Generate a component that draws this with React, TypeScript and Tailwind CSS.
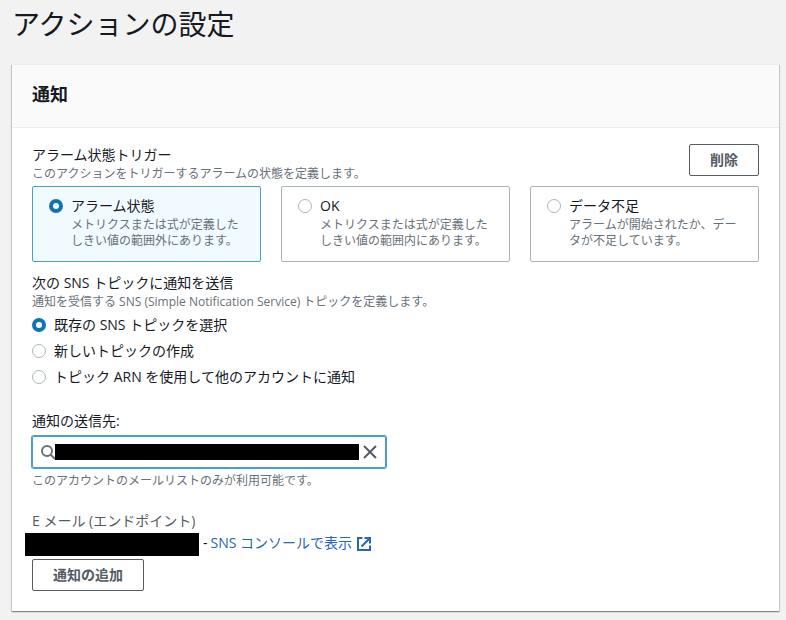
import { useState } from "react";

const triggers = [
  { id: "alarm", title: "アラーム状態", text: "メトリクスまたは式が定義したしきい値の範囲外にあります。" },
  { id: "ok", title: "OK", text: "メトリクスまたは式が定義したしきい値の範囲内にあります。" },
  { id: "insufficient", title: "データ不足", text: "アラームが開始されたか、データが不足しています。" },
];

const topics = [
  { id: "existing", title: "既存の SNS トピックを選択" },
  { id: "new", title: "新しいトピックの作成" },
  { id: "arn", title: "トピック ARN を使用して他のアカウントに通知" },
];

const radioClass =
  "m-0 size-3.5 shrink-0 appearance-none rounded-full border border-[#aab7b8] bg-white checked:border-4 checked:border-[#0f73bb]";

const buttonClass =
  "h-8 rounded-xs border border-[#545b64] bg-white px-5 text-sm leading-5 font-bold text-[#545b64] hover:bg-[#fafafa]";

const hintClass = "pt-px text-xs leading-4 text-[#687078]";

function SearchIcon() {
  return (
    <svg className="h-4 w-3.5 shrink-0" viewBox="0 0 14 16" fill="none" stroke="#687078" strokeWidth="2" aria-hidden="true">
      <circle cx="6" cy="7" r="5" />
      <path d="M9.5 10.5 14 15" />
    </svg>
  );
}

function CloseIcon() {
  return (
    <svg className="size-4" viewBox="0 0 16 16" fill="none" stroke="#545b64" strokeWidth="2" aria-hidden="true">
      <path d="M2 2 14 14M14 2 2 14" />
    </svg>
  );
}

function ExternalIcon() {
  return (
    <svg className="size-4 shrink-0" viewBox="0 0 16 16" fill="none" stroke="currentColor" strokeWidth="2" aria-hidden="true">
      <path d="M6.5 3H2v12h12v-4.5" />
      <path d="M8.5 3H14v5.5M14 3 5.5 11.5" />
    </svg>
  );
}

export default function App() {
  const [trigger, setTrigger] = useState("alarm");
  const [topic, setTopic] = useState("existing");
  const [target, setTarget] = useState("");

  return (
    <main className="min-h-screen bg-[#f2f2f2] pt-1.5 pr-[7px] pb-2 pl-3 font-['Open_Sans','Noto_Sans_CJK_JP',sans-serif] text-sm leading-5 text-[#16191f]">
      <h1 className="text-[28px] leading-9 font-normal">アクションの設定</h1>

      <section className="mt-[22px] border-t border-[#eaeded] bg-white shadow-[0_1px_1px_0_rgba(0,28,36,0.3),1px_1px_1px_0_rgba(0,28,36,0.15),-1px_1px_1px_0_rgba(0,28,36,0.15)]">
        <header className="border-b border-[#eaeded] bg-[#fafafa] px-5 pt-[17px] pb-[21px]">
          <h2 className="text-lg leading-6 font-bold">通知</h2>
        </header>

        <div className="px-5 pt-4 pb-5">
          <div className="flex items-start justify-between">
            <div>
              <h3 id="trigger-label" className="pt-px">アラーム状態トリガー</h3>
              <p className={hintClass}>このアクションをトリガーするアラームの状態を定義します。</p>
            </div>
            <button type="button" className={buttonClass}>削除</button>
          </div>

          <div role="radiogroup" aria-labelledby="trigger-label" className="mt-1 grid grid-cols-3 gap-5">
            {triggers.map((item) => (
              <label
                key={item.id}
                className="flex gap-2 rounded-xs border border-[#aab7b8] px-4 pt-[9px] pb-3 has-checked:border-[#4a9fc9] has-checked:bg-[#f1faff]"
              >
                <input
                  type="radio"
                  name="trigger"
                  className={`${radioClass} mt-[3px]`}
                  checked={trigger === item.id}
                  onChange={() => setTrigger(item.id)}
                />
                <span>
                  <span className="block">{item.title}</span>
                  <span className={`block ${hintClass}`}>{item.text}</span>
                </span>
              </label>
            ))}
          </div>

          <h3 id="topic-label" className="mt-[11px]">次の SNS トピックに通知を送信</h3>
          <p className={hintClass}>
            通知を受信する SNS (Simple Notification Service) トピックを定義します。
          </p>
          <div role="radiogroup" aria-labelledby="topic-label" className="mt-[5px] flex flex-col items-start gap-1.5">
            {topics.map((item) => (
              <label key={item.id} className="flex items-center gap-2">
                <input
                  type="radio"
                  name="topic"
                  className={radioClass}
                  checked={topic === item.id}
                  onChange={() => setTopic(item.id)}
                />
                {item.title}
              </label>
            ))}
          </div>

          <label htmlFor="target" className="mt-6 block">通知の送信先:</label>
          <div className="mt-[5px] flex h-8 w-[354px] max-w-full items-center rounded-xs border border-[#4a9fc9] pr-[7px] pl-2 ring-1 ring-[#4a9fc9]">
            <SearchIcon />
            <input
              id="target"
              type="text"
              className="h-4 min-w-0 flex-1 bg-black text-xs text-black outline-none"
              value={target}
              onChange={(event) => setTarget(event.target.value)}
            />
            <button type="button" aria-label="クリア" className="ml-[3px]" onClick={() => setTarget("")}>
              <CloseIcon />
            </button>
          </div>
          <p className={`mt-1 ${hintClass}`}>このアカウントのメールリストのみが利用可能です。</p>

          <h3 className="mt-[22px] text-[#545b64]">E メール (エンドポイント)</h3>
          <div className="mt-0.5 -ml-[7px] flex items-start">
            <span className="h-[23px] w-[174px] bg-black" />
            <span className="mr-[3px] ml-1">-</span>
            <a href="#sns" className="flex items-center gap-1 text-[#2a65b5] hover:underline">
              SNS コンソールで表示
              <ExternalIcon />
            </a>
          </div>
          <button type="button" className={`${buttonClass} mt-[3px]`}>通知の追加</button>
        </div>
      </section>
    </main>
  );
}
